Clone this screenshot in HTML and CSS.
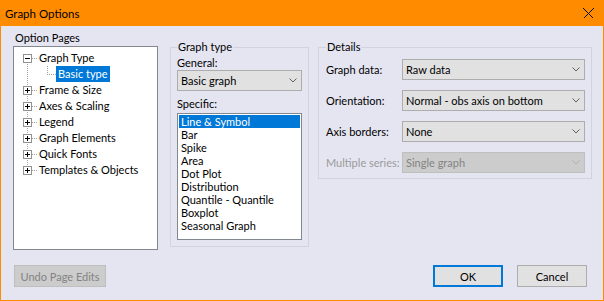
FILE: index.html
```html
<!DOCTYPE html>
<html lang="en">
<head>
    <meta charset="UTF-8">
    <title>Graph Options</title>
    <link rel="stylesheet" href="styles.css">
</head>
<body>
<div class="window">

    <!-- Title bar -->
    <div class="titlebar">
        <span class="title">Graph Options</span>
        <svg class="close" width="11" height="11" viewBox="0 0 11 11">
            <path d="M0.5 0.5 L10.5 10.5 M10.5 0.5 L0.5 10.5" stroke="#000" stroke-width="1" shape-rendering="crispEdges"/>
        </svg>
    </div>

    <div class="content">
        <div class="main">

            <!-- Option pages tree -->
            <div class="pages">
                <div class="pages-label">Option Pages</div>
                <div class="tree">
                    <div class="tree-list">
                        <div class="node"><span class="exp"></span><span class="branch"></span><span class="lbl">Graph Type</span></div>
                        <div class="node"><span class="child-branch"></span><span class="lbl sel">Basic type</span></div>
                        <div class="node"><span class="exp plus"></span><span class="branch"></span><span class="lbl">Frame &amp; Size</span></div>
                        <div class="node"><span class="exp plus"></span><span class="branch"></span><span class="lbl">Axes &amp; Scaling</span></div>
                        <div class="node"><span class="exp plus"></span><span class="branch"></span><span class="lbl">Legend</span></div>
                        <div class="node"><span class="exp plus"></span><span class="branch"></span><span class="lbl">Graph Elements</span></div>
                        <div class="node"><span class="exp plus"></span><span class="branch"></span><span class="lbl">Quick Fonts</span></div>
                        <div class="node"><span class="exp plus"></span><span class="branch"></span><span class="lbl">Templates &amp; Objects</span></div>
                    </div>
                </div>
            </div>

            <!-- Graph type group -->
            <fieldset class="group group-type">
                <legend>Graph type</legend>
                <div class="field-label">General:</div>
                <div class="combo">
                    <span>Basic graph</span>
                    <svg class="chev" width="8" height="5" viewBox="0 0 8 5"><polyline points="0.5,0.5 4,4 7.5,0.5" fill="none" stroke="#606060" stroke-width="1"/></svg>
                </div>
                <div class="field-label specific">Specific:</div>
                <div class="listbox">
                    <div class="opt sel">Line &amp; Symbol</div>
                    <div class="opt">Bar</div>
                    <div class="opt">Spike</div>
                    <div class="opt">Area</div>
                    <div class="opt">Dot Plot</div>
                    <div class="opt">Distribution</div>
                    <div class="opt">Quantile - Quantile</div>
                    <div class="opt">Boxplot</div>
                    <div class="opt">Seasonal Graph</div>
                </div>
            </fieldset>

            <!-- Details group -->
            <fieldset class="group group-details">
                <legend>Details</legend>
                <div class="details-grid">
                    <span>Graph data:</span>
                    <div class="combo">
                        <span>Raw data</span>
                        <svg class="chev" width="8" height="5" viewBox="0 0 8 5"><polyline points="0.5,0.5 4,4 7.5,0.5" fill="none" stroke="#606060" stroke-width="1"/></svg>
                    </div>
                    <span>Orientation:</span>
                    <div class="combo">
                        <span>Normal - obs axis on bottom</span>
                        <svg class="chev" width="8" height="5" viewBox="0 0 8 5"><polyline points="0.5,0.5 4,4 7.5,0.5" fill="none" stroke="#606060" stroke-width="1"/></svg>
                    </div>
                    <span>Axis borders:</span>
                    <div class="combo">
                        <span>None</span>
                        <svg class="chev" width="8" height="5" viewBox="0 0 8 5"><polyline points="0.5,0.5 4,4 7.5,0.5" fill="none" stroke="#606060" stroke-width="1"/></svg>
                    </div>
                    <span class="disabled-label">Multiple series:</span>
                    <div class="combo disabled">
                        <span>Single graph</span>
                        <svg class="chev" width="8" height="5" viewBox="0 0 8 5"><polyline points="0.5,0.5 4,4 7.5,0.5" fill="none" stroke="#b0b0b0" stroke-width="1"/></svg>
                    </div>
                </div>
            </fieldset>
        </div>

        <!-- Buttons -->
        <div class="footer">
            <button class="btn btn-undo" disabled>Undo Page Edits</button>
            <button class="btn btn-ok">OK</button>
            <button class="btn btn-cancel">Cancel</button>
        </div>
    </div>
</div>
</body>
</html>
```

FILE: styles.css
```css
body {
    margin: 0;
    font-family: Lato, "Noto Sans", sans-serif;
    font-size: 11px;
    color: #000;
}
.window {
    width: 604px;
    height: 301px;
    box-sizing: border-box;
    border: 1px solid #ff8c00;
    border-top: none;
    background: #e5e5f1;
    display: flex;
    flex-direction: column;
}
.titlebar {
    height: 26px;
    background: #ff8c00;
    display: flex;
    align-items: center;
    justify-content: space-between;
    padding: 0 9px 0 4px;
}
.title {
    font-size: 11.5px;
}
.close {
    display: block;
}
.content {
    flex: 1;
    padding: 4px 11px 0 12px;
}
.main {
    display: flex;
    align-items: flex-start;
}

/* tree */
.pages {
    width: 145px;
}
.pages-label {
    line-height: 16px;
    padding-left: 2px;
}
.tree {
    height: 204px;
    box-sizing: border-box;
    border: 1px solid #828790;
    background: #fff;
    padding-top: 3px;
}
.tree-list {
    background: repeating-linear-gradient(to bottom, #a0a0a0 0 1px, transparent 1px 2px) 13px 12px / 1px 104px no-repeat;
}
.node {
    display: flex;
    align-items: center;
    height: 16px;
}
.exp {
    width: 9px;
    height: 9px;
    margin-left: 9px;
    box-sizing: border-box;
    border: 1px solid #919191;
    background: linear-gradient(#000, #000) center / 5px 1px no-repeat, #fff;
}
.exp.plus {
    background: linear-gradient(#000, #000) center / 5px 1px no-repeat,
                linear-gradient(#000, #000) center / 1px 5px no-repeat, #fff;
}
.branch {
    width: 5px;
    height: 1px;
    background: repeating-linear-gradient(to right, #a0a0a0 0 1px, transparent 1px 2px);
}
.child-branch {
    width: 9px;
    height: 16px;
    margin-left: 33px;
    background: repeating-linear-gradient(to bottom, #a0a0a0 0 1px, transparent 1px 2px) 0 0 / 1px 8px no-repeat,
                repeating-linear-gradient(to right, #a0a0a0 0 1px, transparent 1px 2px) 0 8px / 9px 1px no-repeat;
}
.lbl {
    padding: 0 2px;
    line-height: 16px;
    white-space: nowrap;
}
.lbl.sel {
    background: #0078d7;
    color: #fff;
}

/* group boxes */
.group {
    margin: 9px 0 0;
    border: 1px solid #d3d3dd;
    min-width: 0;
}
.group legend {
    padding: 0 1px;
    line-height: 16px;
}
.group-type {
    width: 139px;
    box-sizing: border-box;
    margin-left: 12px;
    padding: 1px 6px 6px;
}
.group-details {
    width: 274px;
    box-sizing: border-box;
    margin-left: 9px;
    padding: 4px 6px 5px 7px;
}
.field-label {
    line-height: 14px;
}
.field-label.specific {
    margin-top: 6px;
    margin-bottom: 2px;
}
.combo {
    height: 21px;
    box-sizing: border-box;
    border: 1px solid #adadad;
    background: #e1e1e1;
    display: flex;
    align-items: center;
    justify-content: space-between;
    padding: 0 4px 0 3px;
    white-space: nowrap;
}
.combo.disabled {
    background: #cccccc;
    border-color: #bfbfbf;
    color: #838383;
}
.chev {
    display: block;
}
.listbox {
    height: 127px;
    box-sizing: border-box;
    border: 1px solid #828790;
    background: #fff;
    padding: 1px;
}
.opt {
    line-height: 13px;
    padding: 0 2px;
    white-space: nowrap;
}
.opt.sel {
    background: #0078d7;
    color: #fff;
}
.details-grid {
    display: grid;
    grid-template-columns: 76px 183px;
    grid-auto-rows: 21px;
    row-gap: 10px;
    align-items: center;
}
.disabled-label {
    color: #9a9a9a;
    white-space: nowrap;
}

/* buttons */
.footer {
    display: flex;
    align-items: center;
    margin-top: 15px;
}
.btn {
    height: 22px;
    box-sizing: border-box;
    font-family: inherit;
    font-size: 11px;
    color: #000;
    background: #e1e1e1;
    border: 1px solid #adadad;
    padding: 0;
}
.btn-undo {
    width: 92px;
    margin-left: 1px;
    background: #cccccc;
    border-color: #bfbfbf;
    color: #838383;
}
.btn-ok {
    width: 70px;
    margin-left: auto;
    border: 2px solid #0078d7;
}
.btn-cancel {
    width: 70px;
    margin-left: 14px;
    margin-right: 5px;
}
```
